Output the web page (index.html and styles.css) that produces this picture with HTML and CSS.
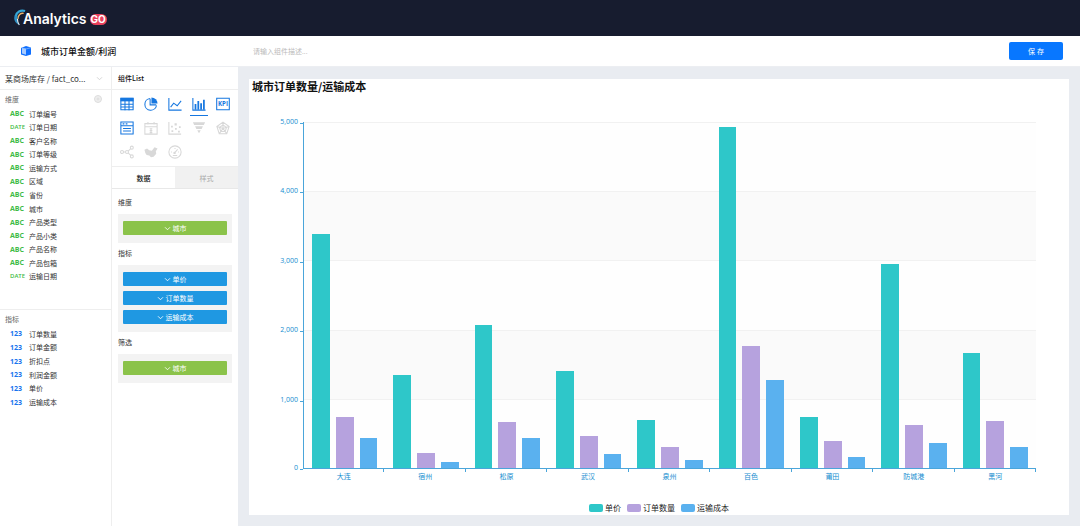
FILE: index.html
```html
<!DOCTYPE html>
<html lang="zh-CN">
<head>
<meta charset="utf-8">
<title>AnalyticsGO</title>
<link rel="stylesheet" href="styles.css">
</head>
<body>
<header class="topbar">
  <svg class="logo-mark" viewBox="0 0 14 20" fill="none">
    <path d="M13 2.500C8 1 4 3.500 3 8" stroke="#35a7d8" stroke-width="2.400"/>
    <path d="M11.500 5C8 4.500 5.500 7 5.200 11" stroke="#f1b46a" stroke-width="1.500"/>
    <path d="M1.800 7c-1.300 4.500 0 8 4.700 10.500C4.500 14 4.300 11 5 8z" fill="#2f8fc4"/>
    <path d="M4.800 11c0 3 .5 4.500 2 6.500" stroke="#e8f4fa" stroke-width="1.200"/>
  </svg>
  <span class="logo-text">Analytics</span><span class="logo-go">GO</span>
</header>
<div class="toolbar">
  <svg class="cube" viewBox="0 0 12 12"><path d="M1 3 6 1l5 1.500v7L6 11 1 9.500z" fill="#0f6fff"/><path d="M6 3.800 2 3v5.500l4 1.200z" fill="#a9ccff"/><path d="M1.500 2.800 6 4l5-1.300" stroke="#8fc0ff" stroke-width=".7" fill="none"/></svg>
  <h1 class="page-title">城市订单金额/利润</h1>
  <input class="desc" type="text" aria-label="组件描述" placeholder="请输入组件描述...">
  <button class="save" type="button">保 存</button>
</div>
<div class="workspace">
  <aside class="fields">
    <button class="source" type="button"><span>某商场库存 / fact_co...</span><svg class="chev" viewBox="0 0 8 6"><path d="M1 1.500 4 4.500l3-3"/></svg></button>
    <section class="dims">
      <div class="group-head"><h2>维度</h2><svg class="badge" viewBox="0 0 8 8"><circle cx="4" cy="4" r="3.500"/><path d="M2.500 4h3M4 2.500v3"/></svg></div>
      <ul class="field-list dim-list">
        <li><b>ABC</b>订单编号</li>
        <li><b class="date">DATE</b>订单日期</li>
        <li><b>ABC</b>客户名称</li>
        <li><b>ABC</b>订单等级</li>
        <li><b>ABC</b>运输方式</li>
        <li><b>ABC</b>区域</li>
        <li><b>ABC</b>省份</li>
        <li><b>ABC</b>城市</li>
        <li><b>ABC</b>产品类型</li>
        <li><b>ABC</b>产品小类</li>
        <li><b>ABC</b>产品名称</li>
        <li><b>ABC</b>产品包箱</li>
        <li><b class="date">DATE</b>运输日期</li>
      </ul>
    </section>
    <section>
      <div class="group-head"><h2>指标</h2></div>
      <ul class="field-list metric-list">
        <li><b>123</b>订单数量</li>
        <li><b>123</b>订单金额</li>
        <li><b>123</b>折扣点</li>
        <li><b>123</b>利润金额</li>
        <li><b>123</b>单价</li>
        <li><b>123</b>运输成本</li>
      </ul>
    </section>
  </aside>
  <aside class="config">
    <h2 class="config-head">组件List</h2>
    <div class="types">
      <button type="button" aria-label="表格"><svg viewBox="0 0 16 16"><path d="M1 1.500h14v13H1z"/><path class="solid" d="M.5 1h15v4H.5z"/><path d="M1 8.300h14M1 11.500h14M5.700 4v11M10.300 4v11"/></svg></button>
      <button type="button" aria-label="饼图"><svg viewBox="0 0 16 16"><path d="M7 1.700A6.700 6.700 0 1 0 14.300 9.500M7 2v7h7"/><path class="solid" d="M8.500.5a7 7 0 0 1 7 7h-7z"/></svg></button>
      <button type="button" aria-label="折线图"><svg viewBox="0 0 16 16"><path d="M1 1v14h14.500M3 11.500l3.500-4.500 4 3L15 4.500"/></svg></button>
      <button type="button" aria-label="柱状图" class="selected"><svg viewBox="0 0 16 16"><path d="M1 1v14h14.500"/><path class="solid" d="M3 8h2v6.500H3zM6.200 4.500h2v10h-2zM9.400 7h2v7.500h-2zM12.600 3h2v11.500h-2z"/></svg></button>
      <button type="button" aria-label="指标卡"><svg viewBox="0 0 16 16"><path d="M.8 1.500h14.400v13H.8z"/><text x="8" y="10.500">KPI</text></svg></button>
      <button type="button" aria-label="文本"><svg viewBox="0 0 16 16"><path d="M1 1.200h14v13.600H1zM1 5.500h14M3 3.300h2M6.500 3.300h2M3.500 8.500h9M3.500 11.500h9"/></svg></button>
      <button type="button" aria-label="日历" disabled><svg viewBox="0 0 16 16"><path d="M1 3h14v12H1zM1 6.500h14M4.500 1v3M11.500 1v3M8 8.500v5M6.500 8.800h3M6.500 11h3M6.500 13.300h3"/></svg></button>
      <button type="button" aria-label="散点图" disabled><svg viewBox="0 0 16 16"><path d="M1 1v14h14"/><path class="solid" d="M3.500 5.500h2v2h-2zM7.500 2.500H10V5H7.500zM8 8h2v2H8zM12.500 6h2v2h-2zM4 10.500h2v2H4zM11.500 11h2v2h-2z"/></svg></button>
      <button type="button" aria-label="漏斗图" disabled><svg viewBox="0 0 16 16"><path class="solid" d="M1 1.500h14l-1.500 3h-11zM3.500 6h9L11 9H5zM6 10.500h4l-2 3.500z"/></svg></button>
      <button type="button" aria-label="雷达图" disabled><svg viewBox="0 0 16 16"><path d="M8 1.200 15 6.300 12.300 14.500H3.700L1 6.300zM8 4.500l4 3-1.500 4.500h-5L4 7.500zM8 1v7.500M1 6.300l7 2.200 7-2.200M3.700 14.500 8 8.500l4.300 6"/></svg></button>
      <button type="button" aria-label="关系图" disabled><svg viewBox="0 0 16 16"><circle cx="2.300" cy="8" r="1.700"/><circle cx="8" cy="8" r="1.700"/><circle cx="13.500" cy="3" r="1.700"/><circle cx="13.500" cy="13" r="1.700"/><path d="M4 8h2.200M9.300 6.900 12.200 4.200M9.300 9.100l2.900 2.700"/></svg></button>
      <button type="button" aria-label="地图" disabled><svg viewBox="0 0 16 16"><path class="solid" d="M.5 5.500 3.500 4l2.500 2 3 .5L12 2.500l3.500 1.500-2 3 .5 3-3 3.500-3 .5-2-2-3-.5L1.500 9z"/></svg></button>
      <button type="button" aria-label="仪表盘" disabled><svg viewBox="0 0 16 16"><circle cx="8" cy="8" r="7"/><path d="M8 8.500 11 5M3.500 8h1M11.500 8h1M8 3.500v1M5.500 12h5"/><circle cx="7.500" cy="9" r=".8"/></svg></button>
    </div>
    <div class="tabs"><button type="button" class="on">数据</button><button type="button">样式</button></div>
    <div class="shelves">
      <h3>维度</h3>
      <div class="shelf"><button type="button" class="chip green"><svg class="chev" viewBox="0 0 8 6"><path d="M1 1.500 4 4.500l3-3"/></svg>城市</button></div>
      <h3>指标</h3>
      <div class="shelf">
        <button type="button" class="chip"><svg class="chev" viewBox="0 0 8 6"><path d="M1 1.500 4 4.500l3-3"/></svg>单价</button>
        <button type="button" class="chip"><svg class="chev" viewBox="0 0 8 6"><path d="M1 1.500 4 4.500l3-3"/></svg>订单数量</button>
        <button type="button" class="chip"><svg class="chev" viewBox="0 0 8 6"><path d="M1 1.500 4 4.500l3-3"/></svg>运输成本</button>
      </div>
      <h3>筛选</h3>
      <div class="shelf"><button type="button" class="chip green"><svg class="chev" viewBox="0 0 8 6"><path d="M1 1.500 4 4.500l3-3"/></svg>城市</button></div>
    </div>
  </aside>
  <main class="stage">
    <section class="panel">
      <h2 class="chart-title">城市订单数量/运输成本</h2>
      <div class="chart">
        <div class="y-axis"><span>5,000</span><span>4,000</span><span>3,000</span><span>2,000</span><span>1,000</span></div>
        <div class="plot">
          <div class="bands"><i></i><i></i><i></i><i></i><i></i></div>
          <div class="bars">
            <div class="cat"><i style="height:67.6%"></i><i style="height:14.7%"></i><i style="height:8.8%"></i></div>
            <div class="cat"><i style="height:27%"></i><i style="height:4.4%"></i><i style="height:1.6%"></i></div>
            <div class="cat"><i style="height:41.2%"></i><i style="height:13.3%"></i><i style="height:8.7%"></i></div>
            <div class="cat"><i style="height:28.1%"></i><i style="height:9.2%"></i><i style="height:4.1%"></i></div>
            <div class="cat"><i style="height:13.9%"></i><i style="height:6.1%"></i><i style="height:2.4%"></i></div>
            <div class="cat"><i style="height:98.7%"></i><i style="height:35.2%"></i><i style="height:25.4%"></i></div>
            <div class="cat"><i style="height:14.8%"></i><i style="height:7.9%"></i><i style="height:3.2%"></i></div>
            <div class="cat"><i style="height:59.1%"></i><i style="height:12.3%"></i><i style="height:7.2%"></i></div>
            <div class="cat"><i style="height:33.2%"></i><i style="height:13.5%"></i><i style="height:6.2%"></i></div>
          </div>
        </div>
        <span class="zero">0</span>
        <div class="x-axis"><span>大连</span><span>宿州</span><span>松原</span><span>武汉</span><span>泉州</span><span>百色</span><span>莆田</span><span>防城港</span><span>黑河</span></div>
      </div>
      <div class="legend"><span>单价</span><span>订单数量</span><span>运输成本</span></div>
    </section>
  </main>
</div>
</body>
</html>
```

FILE: styles.css
```css
* { box-sizing: border-box; }
body {
  margin: 0;
  min-height: 100vh;
  display: flex;
  flex-direction: column;
  font-family: "Open Sans", "Noto Sans CJK SC", sans-serif;
  font-size: 7px;
  color: #333;
  background: #fff;
}
h1, h2, h3, ul { margin: 0; padding: 0; font-size: inherit; font-weight: 400; }
ul { list-style: none; }
button { font: inherit; color: inherit; border: 0; padding: 0; background: none; }
svg { display: block; }

.topbar {
  height: 36px;
  padding: 2px 0 0 13px;
  display: flex;
  align-items: center;
  background: #171c2f;
}
.logo-mark { width: 13px; height: 20px; margin: 0 -3px 2px 0; }
.logo-text { font: 600 14px/20px Inter, sans-serif; color: #fff; }
.logo-go {
  margin-left: 3px;
  padding: 0 1px;
  border-radius: 6px;
  background: #e9405c;
  font: 700 10px/11px Inter, sans-serif;
  color: #fff;
}

.toolbar {
  height: 31px;
  padding: 0 17px 0 20px;
  display: flex;
  align-items: center;
  border-bottom: 1px solid #eceef2;
}
.cube { width: 12px; height: 12px; }
.page-title { width: 212px; margin-left: 9px; font-size: 9px; font-weight: 500; color: #111; }
.desc { flex: 1; min-width: 0; border: 0; padding: 0; font: inherit; color: #333; background: none; }
.desc::placeholder { color: #bbb; }
.save { width: 54px; height: 18px; border-radius: 2px; background: #0877ff; color: #fff; }

.workspace { flex: 1; display: flex; }
.fields { width: 111px; flex: none; }
.source {
  width: 100%;
  height: 23px;
  padding: 0 8px 0 5px;
  display: flex;
  align-items: center;
  justify-content: space-between;
  border-bottom: 1px solid #eee;
  font-family: "Noto Sans CJK SC", sans-serif;
  font-size: 8px;
  white-space: nowrap;
}
.chev { width: 7px; height: 5px; fill: none; stroke: #ccc; stroke-width: 1; }
.dims { height: 220px; border-bottom: 1px solid #eee; }
.group-head {
  height: 17px;
  padding: 0 9px 0 5px;
  display: flex;
  align-items: center;
  justify-content: space-between;
  color: #666;
}
.badge { width: 8px; height: 8px; fill: #eee; stroke: #ddd; stroke-width: 1; }
.field-list { display: grid; grid-auto-rows: 1fr; padding-left: 9px; }
.field-list li { display: flex; align-items: center; }
.field-list b { width: 20px; padding-left: 1px; font-weight: 700; }
.dim-list { height: 176px; }
.dim-list b { color: #41bb48; }
.dim-list .date { font-weight: 600; font-size: 6px; }
.metric-list { height: 82px; }
.metric-list b { color: #1674ee; }

.config { width: 127px; flex: none; border-left: 1px solid #eee; }
.config-head {
  height: 23px;
  padding-left: 6px;
  line-height: 22px;
  border-bottom: 1px solid #eee;
  font-family: "Noto Sans CJK SC", sans-serif;
  font-weight: 500;
  color: #111;
}
.types {
  height: 76px;
  padding: 2px 3px;
  display: grid;
  grid-template-columns: repeat(5, 1fr);
  grid-template-rows: repeat(3, 1fr);
}
.types button { display: grid; place-items: center; margin: 0 3px; color: #1677e0; }
.types button:disabled { color: #d8d8d8; }
.types .selected { border-bottom: 1px solid #1677e0; border-top: 1px solid transparent; }
.types svg { width: 14px; height: 14px; fill: none; stroke: currentColor; stroke-width: 1.2; }
.types .solid { fill: currentColor; stroke: none; }
.types text { font: 700 7px "Open Sans", sans-serif; text-anchor: middle; fill: currentColor; stroke: none; }
.tabs { height: 23px; display: flex; border-top: 1px solid #eee; border-bottom: 1px solid #e8e8e8; }
.tabs button { flex: 1; background: #f1f1f1; color: #aaa; }
.tabs .on { background: #fff; color: #111; font-weight: 500; }
.shelves { padding: 3px 6px 0; }
.shelves h3 { line-height: 22px; }
.shelf { padding: 7px 5px 8px; display: grid; gap: 5px; background: #f3f3f3; }
.chip {
  height: 14px;
  display: flex;
  align-items: center;
  justify-content: center;
  gap: 2px;
  border-radius: 1px;
  background: #1f98e2;
  color: #fff;
}
.chip.green { background: #8bc34a; }
.chip .chev { stroke: #fff; }

.stage { flex: 1; min-width: 0; padding: 12px 11px 11px; display: flex; background: #e9ecf1; }
.panel { flex: 1; min-width: 0; display: flex; flex-direction: column; background: #fff; }
.chart-title {
  padding-left: 3px;
  margin-bottom: 28px;
  font: 700 11px/15px "Noto Sans CJK SC", sans-serif;
  color: #111;
}
.chart {
  flex: 1;
  min-height: 240px;
  padding-right: 33px;
  display: grid;
  grid-template-columns: 54px 1fr;
  grid-template-rows: 1fr 15px;
  color: #168ed0;
}
.y-axis { display: grid; grid-auto-rows: 1fr; text-align: right; line-height: 10px; }
.y-axis span { margin-top: -5px; display: flex; justify-content: flex-end; gap: 2px; }
.y-axis span::after { content: ""; width: 3px; height: 6px; border-bottom: 1px solid #4aa5da; }
.zero { display: flex; justify-content: flex-end; gap: 2px; margin-top: -6px; line-height: 10px; }
.zero::after { content: ""; width: 3px; height: 6px; border-bottom: 1px solid #4aa5da; }
.plot { display: grid; border-left: 1px solid #4aa5da; border-bottom: 1px solid #4aa5da; }
.bands, .bars { grid-area: 1 / 1; display: grid; }
.bands i { border-top: 1px solid #f1f1f1; background: #fefefe; }
.bands i:nth-child(even) { background: #fafafa; }
.bars { grid-template-columns: repeat(9, 1fr); }
.cat { padding: 0 10%; display: flex; align-items: flex-end; gap: 6px; }
.cat i { flex: 1; background: #2ec7c9; }
.cat i:nth-child(2) { background: #b6a2de; }
.cat i:nth-child(3) { background: #5ab1ef; }
.x-axis { display: grid; grid-template-columns: repeat(9, 1fr); text-align: center; line-height: 15px; }
.x-axis span { background: linear-gradient(#4aa5da, #4aa5da) right top / 1px 3px no-repeat; }
.legend { height: 31px; padding-top: 17px; display: flex; justify-content: center; gap: 6px; font-size: 8px; line-height: 12px; color: #222; }
.legend span { display: flex; align-items: center; gap: 2px; }
.legend span::before { content: ""; width: 14px; height: 8px; border-radius: 2px; background: #2ec7c9; }
.legend span:nth-child(2)::before { background: #b6a2de; }
.legend span:nth-child(3)::before { background: #5ab1ef; }
```
